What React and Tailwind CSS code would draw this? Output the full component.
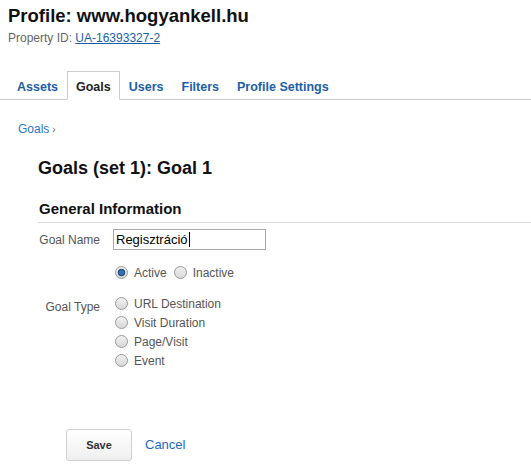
import React from "react"

const TABS = ["Assets", "Goals", "Users", "Filters", "Profile Settings"]
const GOAL_TYPES = ["URL Destination", "Visit Duration", "Page/Visit", "Event"]

function Radio({ checked }) {
  return (
    <svg width="13" height="13" viewBox="0 0 13 13" className="shrink-0">
      <defs>
        <linearGradient id="rg" x1="0" y1="0" x2="0" y2="1">
          <stop offset="0" stopColor="#f2f2f2" />
          <stop offset="1" stopColor="#d6d6d6" />
        </linearGradient>
      </defs>
      <circle cx="6.5" cy="6.5" r="6" fill="url(#rg)" stroke="#9a9a9a" strokeWidth="1" />
      {checked && <circle cx="6.5" cy="6.5" r="3.3" fill="#2f72b8" stroke="#1d3f66" strokeWidth="1" />}
    </svg>
  )
}

function RadioItem({ label, checked }) {
  return (
    <label className="flex items-center gap-[6px] h-[19px] text-[12px] leading-[16px] text-[#555]">
      <Radio checked={checked} />
      <span>{label}</span>
    </label>
  )
}

export default function App() {
  return (
    <div className="w-[531px] h-[470px] overflow-hidden bg-white font-['Liberation_Sans',Arial,sans-serif]">
      {/* header */}
      <div className="px-2 pt-[5px]">
        <h1 className="text-[18.5px] leading-[22px] font-bold text-[#111]">Profile: www.hogyankell.hu</h1>
        <p className="mt-[3px] text-[12px] leading-[16px] text-[#666]">
          Property ID: <a className="text-[#1a5fa8] underline">UA-16393327-2</a>
        </p>
      </div>

      {/* tabs */}
      <div className="mt-[25px] flex items-end border-b border-[#cccccc] pl-2">
        {TABS.map((t) => {
          const active = t === "Goals"
          return (
            <div
              key={t}
              className={
                active
                  ? "-mb-px border border-[#cccccc] border-b-white bg-white px-2 pt-[7px] pb-[4px] text-[12.5px] leading-[16px] font-bold text-[#222]"
                  : "-mb-px border border-transparent px-2 pt-[7px] pb-[4px] text-[12.5px] leading-[16px] font-bold text-[#1d5ea8]"
              }
            >
              {t}
            </div>
          )
        })}
      </div>

      {/* breadcrumb */}
      <div className="mt-[21px] pl-[18px] text-[12px] leading-[16px]">
        <a className="text-[#2a78c4]">Goals</a>
        <span className="ml-[3px] text-[10px] text-[#7a5a3a]">›</span>
      </div>

      <div className="ml-[38px]">
        <h2 className="mt-[20px] text-[18px] leading-[20px] font-bold text-[#111]">Goals (set 1): Goal 1</h2>
        <h3 className="mt-[22px] pb-[4px] border-b border-[#dddddd] pl-px text-[15px] leading-[18px] font-bold text-[#111]">
          General Information
        </h3>

        <div className="grid grid-cols-[62px_1fr] gap-x-[13px]">
          <div className="mt-[6px] flex h-[21px] items-center justify-end text-[12px] leading-[16px] text-[#555]">Goal Name</div>
          <div className="mt-[6px]">
            <div className="flex h-[21px] w-[153px] items-center border border-[#a9a9a9] px-[2px] text-[13px] text-black">
              Regisztráció
              <span className="ml-px inline-block h-[15px] w-px bg-black" />
            </div>
          </div>

          <div />
          <div className="mt-[13px] flex items-center gap-[7px] pl-[2px]">
            <RadioItem label="Active" checked />
            <RadioItem label="Inactive" />
          </div>

          <div className="mt-[12px] pt-[5px] text-right text-[12px] leading-[16px] text-[#555]">Goal Type</div>
          <div className="mt-[12px] flex flex-col pl-[2px]">
            {GOAL_TYPES.map((g) => (
              <RadioItem key={g} label={g} />
            ))}
          </div>
        </div>

        <div className="mt-[59px] ml-[28px] flex items-center gap-[13px]">
          <button className="h-[32px] w-[66px] rounded-[3px] border border-[#cfcfcf] bg-gradient-to-b from-white to-[#efefef] text-[11px] font-bold text-[#333]">
            Save
          </button>
          <a className="text-[13px] leading-[16px] text-[#1a6cc0]">Cancel</a>
        </div>
      </div>
    </div>
  )
}
